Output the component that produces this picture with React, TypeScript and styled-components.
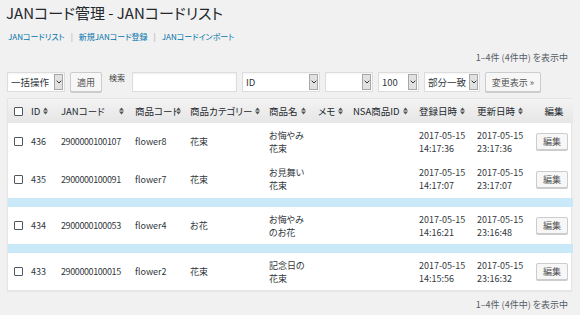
import React from 'react';
import styled, { createGlobalStyle } from 'styled-components';

const GlobalStyle = createGlobalStyle`
  html, body {
    margin: 0;
    padding: 0;
    background: #f1f1f1;
  }
  body {
    font-family: "Noto Sans CJK JP", "Noto Sans", sans-serif;
    font-feature-settings: "palt" 1;
    color: #23282d;
  }
`;

const Page = styled.div`
  width: 580px;
  height: 315px;
  overflow: hidden;
  box-sizing: border-box;
  padding: 0 8px 0 7px;
`;

const Title = styled.h1`
  margin: 0 0 0 -1px;
  font-size: 15px;
  font-weight: 400;
  line-height: 26px;
  color: #23282d;
`;

const SubNav = styled.div`
  margin-top: 4px;
  margin-left: 1px;
  display: flex;
  align-items: center;
  gap: 6px;
  font-size: 8px;
  line-height: 14px;
`;

const NavLink = styled.a`
  color: #0073aa;
  text-decoration: none;
`;

const NavSep = styled.span`
  color: #a0a5aa;
`;

const Count = styled.div`
  margin-top: 7px;
  padding-right: 4px;
  text-align: right;
  font-size: 9px;
  line-height: 14px;
  color: #555d66;
`;

const Toolbar = styled.div`
  margin-top: 7px;
  height: 20px;
  display: flex;
  align-items: center;
  gap: 5px;
  font-size: 9.5px;
`;

const SelectBox = styled.div<{ $w: number }>`
  width: ${p => p.$w}px;
  height: 20px;
  box-sizing: border-box;
  display: flex;
  align-items: center;
  background: #fff;
  border: 1px solid #ddd;
  box-shadow: inset 0 1px 2px rgba(0, 0, 0, 0.05);
`;

const SelectText = styled.span`
  flex: 1;
  padding-left: 3px;
  color: #32373c;
  white-space: nowrap;
  overflow: hidden;
`;

const Arrow = styled.span`
  flex: none;
  width: 9px;
  height: 16px;
  margin-right: 1px;
  box-sizing: border-box;
  border: 1px solid #a7a7a7;
  background: #e1e1e1;
  display: flex;
  align-items: center;
  justify-content: center;
`;

const Button = styled.button<{ $w: number }>`
  width: ${p => p.$w}px;
  height: 20px;
  padding: 0;
  box-sizing: border-box;
  font-family: inherit;
  font-size: 9px;
  color: #555;
  background: #f7f7f7;
  border: 1px solid #ccc;
  border-radius: 2px;
  box-shadow: 0 1px 0 #ccc;
`;

const Label = styled.span`
  align-self: flex-start;
  padding: 0 2px;
  font-size: 8px;
  line-height: 12px;
  color: #444;
`;

const TextInput = styled.div<{ $w: number }>`
  width: ${p => p.$w}px;
  height: 20px;
  box-sizing: border-box;
  background: #fff;
  border: 1px solid #ddd;
  box-shadow: inset 0 1px 2px rgba(0, 0, 0, 0.07);
`;

const TableWrap = styled.div`
  margin-top: 6px;
  width: 565px;
  background: #fff;
  border: 1px solid #e5e5e5;
  box-sizing: border-box;
  box-shadow: 0 1px 1px rgba(0, 0, 0, 0.04);
`;

const Table = styled.table`
  width: 100%;
  border-collapse: collapse;
  table-layout: fixed;
  font-size: 9px;
  color: #32373c;
`;

const HeadRow = styled.tr`
  height: 24px;
  background: linear-gradient(#f3f3f3, #e6e6e6);
`;

const Th = styled.th`
  padding: 0 0 0 4px;
  font-size: 9.5px;
  font-weight: 400;
  text-align: left;
  white-space: nowrap;
  overflow: hidden;
  color: #23282d;
`;

const ThInner = styled.div<{ $spread?: boolean; $center?: boolean; $overlap?: boolean }>`
  display: flex;
  align-items: center;
  gap: 3px;
  justify-content: ${p => (p.$center ? 'center' : 'flex-start')};
  padding-right: ${p => (p.$spread ? '7px' : '0')};
  & > svg {
    flex: none;
    margin-left: ${p => (p.$spread ? 'auto' : p.$overlap ? '-7px' : '0')};
    background: ${p => (p.$overlap ? '#ececec' : 'transparent')};
  }
`;

const Row = styled.tr<{ $h: number }>`
  height: ${p => p.$h}px;
`;

const Td = styled.td<{ $tight?: boolean }>`
  padding: 0 0 0 4px;
  vertical-align: middle;
  line-height: 13px;
  white-space: nowrap;
  overflow: hidden;
  letter-spacing: ${p => (p.$tight ? '-0.4px' : '0')};
`;

const BandRow = styled.tr`
  height: 9px;
  background: #c9e8f8;
`;

const Check = styled.span`
  display: block;
  width: 9px;
  height: 9px;
  margin-left: 2px;
  box-sizing: border-box;
  border: 1px solid #50575e;
  border-radius: 1px;
  background: #fff;
`;

const EditButton = styled.button`
  width: 32px;
  height: 17px;
  margin-left: 1px;
  padding: 0;
  font-family: inherit;
  font-size: 9px;
  color: #555;
  background: #f7f7f7;
  border: 1px solid #ccc;
  border-radius: 2px;
  box-shadow: 0 1px 0 #ccc;
`;

const SortIcon = () => (
  <svg width="5" height="8" viewBox="0 0 5 8">
    <polygon points="0,3.4 2.5,0.4 5,3.4" fill="#555" />
    <polygon points="0,4.6 5,4.6 2.5,7.6" fill="#555" />
  </svg>
);

const Chevron = () => (
  <svg width="6" height="4" viewBox="0 0 6 4">
    <polyline points="0.7,0.7 3,3 5.3,0.7" fill="none" stroke="#333" strokeWidth="1" />
  </svg>
);

const Select = ({ w, value }: { w: number; value: string }) => (
  <SelectBox $w={w}>
    <SelectText>{value}</SelectText>
    <Arrow>
      <Chevron />
    </Arrow>
  </SelectBox>
);

const widths = [19, 30, 74, 55, 79, 49, 35, 66, 58, 58, 42];

const headers: { label: string; spread?: boolean; overlap?: boolean }[] = [
  { label: 'ID' },
  { label: 'JANコード', spread: true },
  { label: '商品コード', overlap: true },
  { label: '商品カテゴリー' },
  { label: '商品名' },
  { label: 'メモ' },
  { label: 'NSA商品ID' },
  { label: '登録日時' },
  { label: '更新日時' },
];

type Item = {
  id: number;
  jan: string;
  code: string;
  category: string;
  name: string[];
  created: string;
  updated: string;
  h: number;
  band?: boolean;
};

const items: Item[] = [
  { id: 436, jan: '2900000100107', code: 'flower8', category: '花束', name: ['お悔やみ', '花束'], created: '14:17:36', updated: '23:17:36', h: 37 },
  { id: 435, jan: '2900000100091', code: 'flower7', category: '花束', name: ['お見舞い', '花束'], created: '14:17:07', updated: '23:17:07', h: 38, band: true },
  { id: 434, jan: '2900000100053', code: 'flower4', category: 'お花', name: ['お悔やみ', 'のお花'], created: '14:16:21', updated: '23:16:48', h: 37, band: true },
  { id: 433, jan: '2900000100015', code: 'flower2', category: '花束', name: ['記念日の', '花束'], created: '14:15:56', updated: '23:16:32', h: 37 },
];

const Lines = ({ lines }: { lines: string[] }) => (
  <>
    {lines.map((l, i) => (
      <React.Fragment key={i}>
        {i > 0 && <br />}
        {l}
      </React.Fragment>
    ))}
  </>
);

export default function App() {
  return (
    <Page>
      <GlobalStyle />
      <Title>JANコード管理 - JANコードリスト</Title>
      <SubNav>
        <NavLink>JANコードリスト</NavLink>
        <NavSep>|</NavSep>
        <NavLink>新規JANコード登録</NavLink>
        <NavSep>|</NavSep>
        <NavLink>JANコードインポート</NavLink>
      </SubNav>
      <Count>1–4件 (4件中) を表示中</Count>
      <Toolbar>
        <Select w={58} value="一括操作" />
        <Button $w={32}>適用</Button>
        <Label>検索</Label>
        <TextInput $w={105} />
        <Select w={78} value="ID" />
        <Select w={48} value="" />
        <Select w={41} value="100" />
        <Select w={56} value="部分一致" />
        <Button $w={56}>変更表示 »</Button>
      </Toolbar>
      <TableWrap>
        <Table>
          <colgroup>
            {widths.map((w, i) => (
              <col key={i} style={{ width: w }} />
            ))}
          </colgroup>
          <thead>
            <HeadRow>
              <Th>
                <Check />
              </Th>
              {headers.map(h => (
                <Th key={h.label}>
                  <ThInner $spread={h.spread} $overlap={h.overlap}>
                    <span>{h.label}</span>
                    <SortIcon />
                  </ThInner>
                </Th>
              ))}
              <Th>
                <ThInner $center>
                  <span>編集</span>
                </ThInner>
              </Th>
            </HeadRow>
          </thead>
          <tbody>
            {items.map(it => (
              <React.Fragment key={it.id}>
                <Row $h={it.h}>
                  <Td>
                    <Check />
                  </Td>
                  <Td>{it.id}</Td>
                  <Td $tight>{it.jan}</Td>
                  <Td>{it.code}</Td>
                  <Td>{it.category}</Td>
                  <Td>
                    <Lines lines={it.name} />
                  </Td>
                  <Td />
                  <Td />
                  <Td>
                    <Lines lines={['2017-05-15', it.created]} />
                  </Td>
                  <Td>
                    <Lines lines={['2017-05-15', it.updated]} />
                  </Td>
                  <Td>
                    <EditButton>編集</EditButton>
                  </Td>
                </Row>
                {it.band && (
                  <BandRow>
                    <td colSpan={11} />
                  </BandRow>
                )}
              </React.Fragment>
            ))}
          </tbody>
        </Table>
      </TableWrap>
      <Count>1–4件 (4件中) を表示中</Count>
    </Page>
  );
}
